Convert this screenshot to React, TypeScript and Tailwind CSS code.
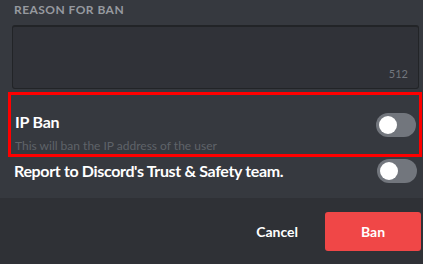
import React from 'react';

function Toggle({ className = '' }: { className?: string }) {
  return (
    <div className={`flex h-6 w-10 shrink-0 items-center rounded-full bg-[#72767d] px-[3px] ${className}`}>
      <div className="h-[18px] w-[18px] rounded-full bg-white" />
    </div>
  );
}

export default function App() {
  return (
    <div
      className="flex h-[264px] w-[423px] flex-col overflow-hidden bg-[#36393f]"
      style={{ fontFamily: 'Lato, "Noto Sans", sans-serif' }}
    >
      <div className="flex-1">
        <div className="pl-[14px] pt-[2px] text-[12px] font-bold uppercase leading-4 tracking-[0.45px] text-[#969a9f]">
          Reason for ban
        </div>
        <div className="ml-3 mr-1 mt-[7px] flex h-[64px] items-end justify-end rounded-[3px] border border-[#222427] border-t-2 bg-[#303238] px-[10px] pb-[8px]">
          <span className="text-[11px] leading-3 text-[#72767d]">512</span>
        </div>
        <div className="ml-2 mr-[1px] mt-[3px] flex h-[65px] items-start border-[3px] border-[#ff0000] pl-[4px] pr-[3px] pt-[17px]">
          <div className="flex-1">
            <div className="text-[16px] font-bold leading-5 tracking-[-0.2px] text-white">IP Ban</div>
            <div className="mt-[7px] text-[12px] leading-[14px] text-[#5f6369]">
              This will ban the IP address of the user
            </div>
          </div>
          <Toggle className="mt-[1px]" />
        </div>
        <div className="ml-[14px] mr-[6px] mt-[2px] flex h-6 items-center">
          <div className="flex-1 text-[16px] font-bold leading-5 tracking-[-0.35px] text-white">
            Report to Discord's Trust &amp; Safety team.
          </div>
          <Toggle />
        </div>
      </div>
      <div className="flex h-[66px] items-center justify-end bg-[#2f3136] pr-[2px]">
        <button className="mr-[27px] text-[14px] font-bold text-white">Cancel</button>
        <button className="h-[39px] w-[96px] rounded-[3px] bg-[#f04747] text-[14px] font-bold text-white">
          Ban
        </button>
      </div>
    </div>
  );
}
